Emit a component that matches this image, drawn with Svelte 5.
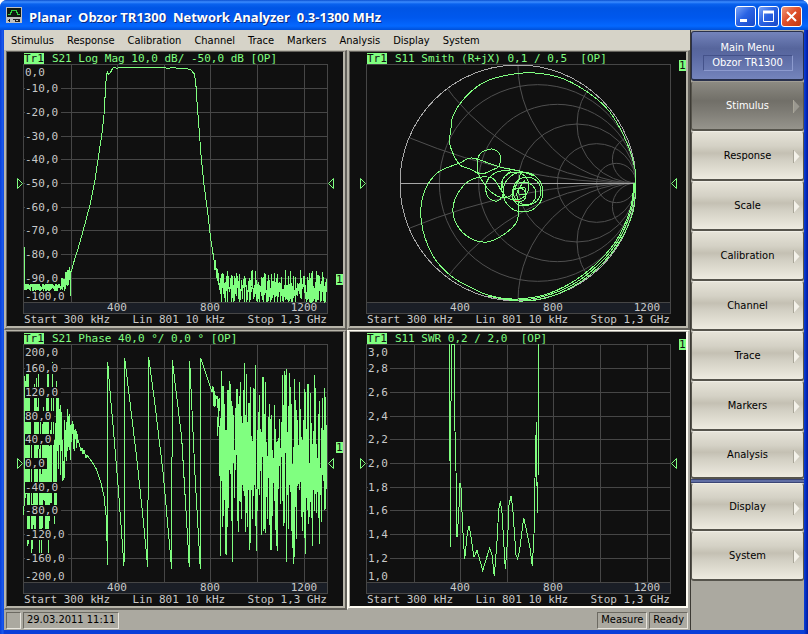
<script>
  const menus = ["Stimulus", "Response", "Calibration", "Channel", "Trace", "Markers", "Analysis", "Display", "System"];
  const softkeys = ["Stimulus", "Response", "Scale", "Calibration", "Channel", "Trace", "Markers", "Analysis", "Display", "System"];

  const gridX = [64, 110, 157, 203, 250, 297];
  const gridY = [24, 48, 72, 95, 119, 143, 166, 190, 214];

  // Smith chart geometry
  const cx = 168;
  const cy = 119;
  const r = 118;
  const steps = [0.2, 0.5, 1, 2, 5];

  let seed = 1300;
  function random() {
    seed = (seed * 16807) % 2147483647;
    return seed / 2147483647;
  }

  function noise(from, to, step, next) {
    const out = [];
    for (let x = from; x < to; x += step) {
      out.push([x, next(x)]);
    }
    return out;
  }

  function line(points) {
    return "M" + points.map(([x, y]) => x.toFixed(1) + " " + y.toFixed(1)).join("L");
  }

  // Catmull-Rom spline through the points
  function smooth(points) {
    let d = "M" + points[0].join(" ");
    for (let i = 0; i < points.length - 1; i++) {
      const a = points[i - 1] || points[i];
      const b = points[i];
      const c = points[i + 1];
      const e = points[i + 2] || c;
      d += `C${b[0] + (c[0] - a[0]) / 6} ${b[1] + (c[1] - a[1]) / 6} ${c[0] - (e[0] - b[0]) / 6} ${c[1] - (e[1] - b[1]) / 6} ${c[0]} ${c[1]}`;
    }
    return d;
  }

  function logMag() {
    return line([
      [17, 183], [17, 217],
      ...noise(18, 55, 0.25, () => (random() > 0.95 ? 237 : 219 + random() * 7)),
      ...noise(55, 64, 0.3, (x) => 222 - (x - 55) * 1.3 + (random() - 0.5) * 22),
      [63, 233], [64, 208],
      [64.7, 205.7], [68, 194], [71.3, 184], [76.3, 166], [83, 141], [88, 116], [92.3, 87], [95.3, 67], [97.7, 44],
      [98.3, 24], [99.3, 14], [100.3, 7], [101.3, 10.5], [103.7, 8], [105.7, 4], [108, 3], [109.7, 4.5], [112, 3.3],
      [158, 3.3], [160.3, 4.7], [164.7, 3.7], [179.7, 4.7], [184, 6], [187.3, 10], [188.7, 17.3], [189.7, 34],
      [192, 64], [194, 90.7], [197, 120.7], [201, 150.7], [204, 177.3], [207.3, 197.3],
      ...noise(208, 213, 0.38, (x) => 200 + (x - 208) * 4 + (random() - 0.5) * 14),
      ...noise(213, 320, 0.3, () => Math.min(238, 204 + (random() * 1.3 + random() * 0.7) * 21)),
    ]);
  }

  function phase() {
    return line([
      ...noise(17, 50, 0.45, () => (random() > 0.5 ? 18 + random() * 80 : 130 + random() * 92)),
      ...noise(50, 72, 0.35, (x) => 95 + (random() - 0.5) * 110 * Math.pow((74 - x) / 22, 1.1) + (x - 60) / 5),
      [73, 103], [74, 107], [75, 104], [76, 110], [77, 106], [78, 110], [79, 114], [80, 111],
      [84.7, 117.3], [89.7, 125.7], [94, 139], [97, 152.3], [99, 170.7], [100, 197.3], [100.5, 220.7], [100.7, 18],
      [103, 47.3], [106.3, 84], [111.3, 144], [117, 222.3], [117.7, 14],
      [121.3, 44], [129.7, 114], [135.7, 170.7], [140.7, 222.7], [141.7, 13.3],
      [148, 60.7], [156.3, 130.7], [164.7, 225.3], [165.3, 16.3],
      [174.7, 94], [182.3, 223.3], [182.7, 16.7],
      [188, 130.7], [193.3, 224.7], [193.7, 14], [199.7, 32.3], [205, 48],
      ...noise(205, 213, 0.6, (x) => 50 + (x - 205) * 1.5 + (random() - 0.5) * 20),
      [210.5, 92], [211.5, 55],
      ...noise(213, 320, 0.27, () => 12 + (random() * 1.2 + random() * 0.8) * 107),
    ]);
  }

  const swr = line([
    [99.3, 0], [99.7, 117.3], [100, 75], [100.3, 202.7], [101.3, 0], [104.3, 0], [105, 87.3], [106, 127], [107, 193.3],
    [108.7, 170.7], [110, 139.3], [111, 144], [112.7, 184], [114.7, 215.3], [117.3, 189], [119, 182.3], [120.7, 190.7],
    [124, 213.3], [127, 206.3], [129.3, 214], [132.7, 226.7], [136, 215.7], [139.7, 204], [142, 210.7], [144.3, 232.3],
    [147, 197.3], [148.7, 165.7], [150.3, 157.3], [152, 169], [155.3, 224.7], [157.7, 194], [159, 160.7], [161, 152.3],
    [162.7, 164], [166, 210.7], [167.7, 214.7], [169.7, 205.7], [173.7, 174], [176.7, 187.3], [180.3, 205.7],
    [182.3, 222.3], [184, 190.7], [185, 134], [186.3, 78.3], [187.3, 169], [188, 145], [188.3, 0],
  ]);

  const smithTrace =
    smooth([
      [286, 119], [285, 105], [277, 79], [262, 51], [248, 36], [228, 22], [208, 13], [185, 9], [168, 9.5], [145, 14],
      [128, 22], [112, 37], [103, 52], [101, 64], [100, 81], [109, 100], [120, 105], [131, 110], [142, 106], [149, 102],
      [150, 91], [142, 85], [130, 90], [127, 103], [130, 113], [139, 126], [150, 133], [160, 132], [167, 120],
      [170, 108], [160, 106], [145, 109], [136, 120], [138, 133], [147, 137], [153, 130], [153, 115], [161, 107],
    ]) +
    smooth([
      [184, 112], [170, 107], [150, 103], [122, 94], [110, 99], [90, 107], [78, 120], [72, 136], [71, 154], [75, 174],
      [85, 195], [101, 212], [118, 222], [138, 231], [168, 236], [195, 232], [222, 221], [248, 201], [268, 177],
      [281, 147], [285, 119],
    ]) +
    smooth([
      [152, 128], [142, 114], [123, 115], [110, 126], [103, 144], [107, 161], [120, 174], [137, 178], [153, 171],
      [166, 159], [169, 143], [167, 129], [175, 116],
    ]) +
    smooth([[138, 232], [168, 237], [196, 234], [224, 222], [250, 202], [270, 177], [283, 148], [286, 119]]) +
    smooth([[150, 234], [168, 235], [194, 231], [221, 219], [246, 200], [266, 177], [280, 146], [284, 119]]);

  const smithLoops = [
    [173, 128, 20], [165, 122, 14], [177, 127, 14], [174, 130, 12], [172, 127, 4], [169, 131, 7],
  ];

  const panels = [
    {
      title: "S21 Log Mag 10,0 dB/ -50,0 dB [OP]",
      labels: ["0,0", "-10,0", "-20,0", "-30,0", "-40,0", "-50,0", "-60,0", "-70,0", "-80,0", "-90,0", "-100,0"],
      trace: logMag(),
      badge: 210,
    },
    { title: "S11 Smith (R+jX) 0,1 / 0,5  [OP]", smith: true, badge: -4 },
    {
      title: "S21 Phase 40,0 °/ 0,0 ° [OP]",
      labels: ["200,0", "160,0", "120,0", "80,0", "40,0", "0,0", "-40,0", "-80,0", "-120,0", "-160,0", "-200,0"],
      trace: phase(),
      badge: 98,
    },
    {
      title: "S11 SWR 0,2 / 2,0  [OP]",
      labels: ["3,0", "2,8", "2,6", "2,4", "2,2", "2,0", "1,8", "1,6", "1,4", "1,2", "1,0"],
      trace: swr,
      badge: -5,
      active: true,
    },
  ];

  function labelY(i) {
    if (i === 0) return 12;
    if (i === 10) return 236;
    return gridY[i - 1] + 4;
  }
</script>

<svelte:head>
  <title>Planar Obzor TR1300 Network Analyzer</title>
</svelte:head>

<div class="window">
  <header class="titlebar">
    <svg class="logo" width="16" height="16" viewBox="0 0 16 16" shape-rendering="crispEdges">
      <rect width="16" height="16" fill="#c0c0c0" />
      <rect x="1" y="1" width="14" height="9" fill="#101810" />
      <path d="M2 7.5h2l2-4h4l2 4h2" fill="none" stroke="#30d040" />
      <path d="M2 13.5h2M3.500 12v3M7 12.500h2v2h3v-2h-2M13 12v3" fill="none" stroke="#202020" />
    </svg>
    <h1>Planar  Obzor TR1300  Network Analyzer  0.3-1300 MHz</h1>
    <button class="winbtn" aria-label="Minimize">
      <svg width="19" height="19" viewBox="0 0 19 19"><path d="M4 13.500h7" stroke="#fff" stroke-width="3" /></svg>
    </button>
    <button class="winbtn" aria-label="Maximize">
      <svg width="19" height="19" viewBox="0 0 19 19">
        <path d="M4.500 5v9.500h10V5M4 5.500h11" fill="none" stroke="#fff" />
        <path d="M4 5h11" stroke="#fff" stroke-width="3" />
      </svg>
    </button>
    <button class="winbtn close" aria-label="Close">
      <svg width="19" height="19" viewBox="0 0 19 19"><path d="M5 5l9 9M14 5l-9 9" stroke="#fff" stroke-width="2" /></svg>
    </button>
  </header>

  <div class="body">
    <main class="workspace">
      <nav class="menubar">
        {#each menus as item}
          <button>{item}</button>
        {/each}
      </nav>

      <div class="charts">
        {#each panels as panel}
          <section class="panel" class:active={panel.active}>
            <div class="caption"><span class="tag">Tr1</span><span>{panel.title}</span></div>
            <svg class="plot" viewBox="0 0 336 250">
              <g shape-rendering="crispEdges">
                <rect class="strip" x="16" y="238" width="305" height="11" />
                {#if !panel.smith}
                  {#each gridX as x}
                    <path class="grid" d="M{x + 0.5} 0v238" />
                  {/each}
                  {#each gridY as y}
                    <path class="grid" d="M16 {y + 0.5}h304" />
                  {/each}
                {/if}
                <rect class="frame" x="16.5" y="0.5" width="304" height="238" />
                <rect class="frame" x="16.5" y="238.5" width="304" height="11" />
              </g>

              {#if panel.smith}
                <clipPath id="unit"><circle {cx} {cy} {r} /></clipPath>
                <g class="smith" clip-path="url(#unit)">
                  {#each steps as s}
                    <circle cx={cx + (r * s) / (1 + s)} {cy} r={r / (1 + s)} />
                    <circle cx={cx + r} cy={cy - r / s} r={r / s} />
                    <circle cx={cx + r} cy={cy + r / s} r={r / s} />
                  {/each}
                </g>
                <g shape-rendering="crispEdges">
                  <circle class="rim" {cx} {cy} {r} />
                  <path class="rim" d="M{cx - r} {cy + 0.5}h{2 * r}" />
                  <path class="trace" d={smithTrace} />
                  {#each smithLoops as [x, y, radius]}
                    <circle class="trace" cx={x} cy={y} r={radius} />
                  {/each}
                  <path d="M165 136.500h4" stroke="#c03030" />
                </g>
              {:else}
                <path class="trace" shape-rendering="crispEdges" d={panel.trace} />
                {#each panel.labels as label, i}
                  <rect class="mask" x="18" y={labelY(i) - 9} width={label.length * 7 + 1} height="11" />
                  <text class="value" x="18" y={labelY(i)}>{label}</text>
                {/each}
              {/if}

              <text class="value" x="110" y="247" text-anchor="middle">400</text>
              <text class="value" x="203" y="247" text-anchor="middle">800</text>
              <text class="value" x="297" y="247" text-anchor="middle">1200</text>

              <path class="ref" d="M10.500 114.500v10l5-5zM326.500 114.500v10l-5-5z" />
              <rect class="badge" x="329" y={panel.badge} width="7" height="11" />
              <text class="badge-text" x="329" y={panel.badge + 9}>1</text>
            </svg>
            <div class="sweep"><span>Start 300 kHz</span><span>Lin 801 10 kHz</span><span>Stop 1,3 GHz</span></div>
          </section>
        {/each}
      </div>

      <footer class="statusbar">
        <span class="cell grip"></span>
        <span class="cell">29.03.2011 11:11</span>
        <span class="spacer"></span>
        <span class="cell">Measure</span>
        <span class="cell">Ready</span>
      </footer>
    </main>

    <aside class="softkeys">
      <div class="key head">
        <span>Main Menu</span>
        <span class="device">Obzor TR1300</span>
      </div>
      {#each softkeys as key, i}
        {#if key === "Display"}
          <div class="divider"></div>
        {/if}
        <button class="key" class:selected={i === 0} class:short={key === "Analysis" || key === "Display"}>
          {key}
          <svg class="arrow" width="7" height="13" viewBox="0 0 7 13">
            <path d="M.500 0v13l6-6.500z" />
            <path class="edge" d="M.500 0v13" />
          </svg>
        </button>
      {/each}
    </aside>
  </div>
</div>

<style>
  :global(body) {
    margin: 0;
    background: #fff;
  }
  .window {
    box-sizing: border-box;
    display: flex;
    flex-direction: column;
    min-height: 100vh;
    padding: 0 4px 4px;
    background: linear-gradient(90deg, #0a3fd8, #1a5cf0 3px, #0a3fd8 4px, #0a3fd8 calc(100% - 4px), #0019a0);
    border-radius: 7px 7px 0 0;
    font-family: "DejaVu Sans Condensed", "DejaVu Sans", sans-serif;
    font-size: 11px;
    color: #000;
  }
  button {
    font: inherit;
    color: inherit;
    padding: 0;
  }

  .titlebar {
    display: flex;
    align-items: center;
    gap: 2px;
    height: 30px;
    margin: 0 -4px;
    padding: 0 6px;
    box-sizing: border-box;
    border-radius: 7px 7px 0 0;
    background: linear-gradient(#0a4fd0 0, #3c8cff 2px, #0a62ee 4px, #0055e5 8px, #0058ee 18px, #0468ff 26px, #0050d8 30px);
  }
  .logo {
    margin-right: 5px;
  }
  h1 {
    flex: 1;
    margin: 0;
    padding-top: 4px;
    font-family: "Open Sans", sans-serif;
    font-size: 13px;
    line-height: 20px;
    font-weight: bold;
    color: #fff;
    text-shadow: 1px 1px 0 #0a2a80;
    white-space: pre;
  }
  .winbtn {
    display: block;
    box-sizing: border-box;
    width: 21px;
    height: 21px;
    margin-top: 3px;
    border: 1px solid #fff;
    border-radius: 3px;
    background: linear-gradient(135deg, #7aa4f8, #2a63e4 45%, #1848c8);
  }
  .winbtn svg {
    display: block;
  }
  .winbtn.close {
    background: linear-gradient(135deg, #f09878, #e0502c 45%, #c03810);
  }

  .body {
    flex: 1;
    display: flex;
    background: #aba9a0;
  }
  .workspace {
    flex: 1;
    min-width: 0;
    display: flex;
    flex-direction: column;
  }

  .menubar {
    display: flex;
    gap: 13px;
    height: 20px;
    padding-left: 7px;
    background: #d6d3c8;
  }
  .menubar button {
    border: none;
    background: none;
  }

  .charts {
    display: grid;
    grid-template-columns: 1fr 1fr;
    background: #101010;
  }
  .panel {
    box-sizing: border-box;
    min-width: 0;
    border: ridge #b8b5aa;
    border-width: 2px 4px 4px 3px;
    background: #101010;
    font-family: "DejaVu Sans Mono", monospace;
    font-size: 11px;
  }
  .panel.active {
    border-color: #fffcf2;
  }
  .caption {
    display: flex;
    align-items: flex-end;
    gap: 8px;
    height: 12px;
    padding-left: 17px;
    line-height: 11px;
    color: #80ff80;
    white-space: pre;
  }
  .tag {
    color: #101010;
    background: #80ff80;
  }
  .plot {
    display: block;
    width: 100%;
    overflow: visible;
  }
  .grid {
    fill: none;
    stroke: #464646;
  }
  .frame {
    fill: none;
    stroke: #464646;
  }
  .strip {
    fill: #1a1e26;
  }
  .smith {
    fill: none;
    stroke: #505050;
  }
  .rim {
    fill: none;
    stroke: #a8a8a8;
  }
  .trace {
    fill: none;
    stroke: #80ff80;
  }
  .mask {
    fill: #101010;
  }
  .value {
    fill: #c8c8c8;
  }
  .ref {
    fill: none;
    stroke: #80ff80;
  }
  .badge {
    fill: #80ff80;
  }
  .badge-text {
    fill: #101010;
  }
  .sweep {
    display: flex;
    justify-content: space-between;
    height: 12px;
    padding: 0 16px 0 17px;
    line-height: 12px;
    color: #c8c8c8;
    white-space: pre;
  }

  .statusbar {
    flex: 1;
    display: flex;
    align-items: stretch;
    gap: 2px;
    padding: 2px 2px 1px;
    line-height: 14px;
  }
  .cell {
    padding: 0 3px;
    border: 1px solid;
    border-color: #6c6a62 #e8e6de #e8e6de #6c6a62;
  }
  .grip {
    width: 7px;
  }
  .spacer {
    flex: 1;
  }

  .softkeys {
    display: flex;
    flex-direction: column;
    width: 113px;
    padding-top: 1px;
    border-left: 1px solid #3c3a34;
  }
  .key {
    position: relative;
    box-sizing: border-box;
    height: 50px;
    border: 1px solid #56544c;
    border-top-color: #f0eee6;
    border-bottom-width: 2px;
    border-radius: 3px;
    background: linear-gradient(#e6e3d8, #d4d1c5 30%, #c4c0b3 45%, #d2cfc3 60%, #eeebe0);
  }
  .key.short {
    height: 48px;
  }
  .key.selected {
    color: #fff;
    border-top-color: #a09d94;
    background: linear-gradient(#8c8a82, #716f68 40%, #7c7a73 60%, #96948c);
  }
  .key.head {
    display: flex;
    flex-direction: column;
    justify-content: center;
    align-items: center;
    color: #fff;
    line-height: 14px;
    border-color: #28304c;
    background: linear-gradient(#7484bc, #56659c 35%, #5a69a2 50%, #7484bc);
  }
  .device {
    box-sizing: border-box;
    width: 90px;
    text-align: center;
    border: 1px solid;
    border-color: #44528a #8c9ace #8c9ace #44528a;
  }
  .divider {
    height: 4px;
    background: linear-gradient(#28305c, #7484bc, #28305c);
  }
  .arrow {
    position: absolute;
    top: 18px;
    right: 3px;
  }
  .arrow path {
    fill: #f4f2ea;
  }
  .arrow .edge {
    stroke: #a8a598;
  }
  .selected .arrow path {
    fill: #9a9890;
  }
</style>
